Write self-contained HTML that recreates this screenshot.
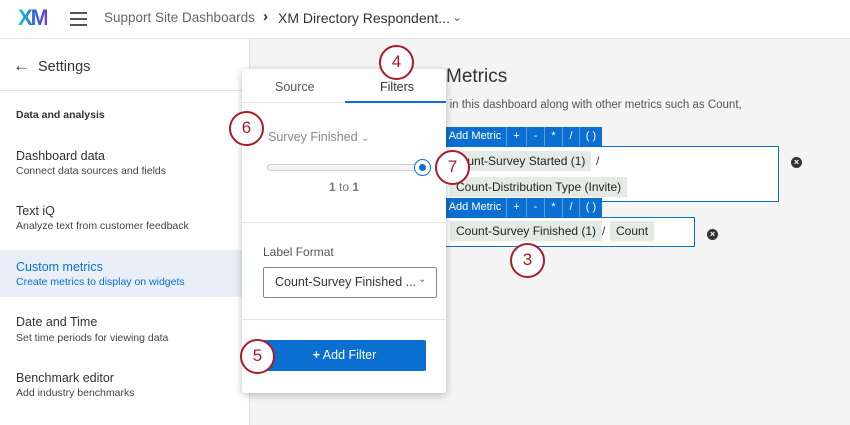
<!DOCTYPE html><html><head><style>
*{box-sizing:border-box;margin:0;padding:0}
body{width:850px;height:425px;overflow:hidden;background:#f4f4f5;font-family:"Liberation Sans",sans-serif;color:#333;position:relative}
.a{position:absolute;white-space:nowrap}
.hdr{left:0;top:0;width:850px;height:39px;background:#fff;border-bottom:1px solid #e2e2e2}
.side{left:0;top:39px;width:250px;height:386px;background:#fff;border-right:1px solid #e2e2e2}
.t{font-size:12.5px;color:#333}.s{font-size:10.5px;color:#444}
.tb{height:19px;background:#0b6fd1;display:flex}
.tb span{color:#fff;font-size:11px;line-height:19px;border-right:1px solid #5a9ee3;text-align:center}
.chip{background:#e3ebe7;font-size:12px;line-height:20px;padding:0 6px;height:20px;color:#222}
.c{width:35px;height:35px;border:2.5px solid #a81c28;border-radius:50%;background:#fff;color:#a81c28;font-size:17px;text-align:center;line-height:30px}
.x{width:11px;height:11px;border-radius:50%;background:#333;color:#fff;font-size:9px;line-height:11px;text-align:center;font-weight:bold}
</style></head><body>
<div class="a hdr"></div>
<div class="a" style="left:18px;top:5px;font-size:22px;font-weight:bold;letter-spacing:-2px;background:linear-gradient(90deg,#20d0d0,#2a6ae0,#6a40e0);-webkit-background-clip:text;color:transparent">XM</div>
<div class="a" style="left:70px;top:12px;width:17px;height:2px;background:#555;box-shadow:0 6px 0 #555,0 12px 0 #555"></div>
<div class="a" style="left:104px;top:10px;font-size:13.5px;color:#666">Support Site Dashboards</div>
<div class="a" style="left:263px;top:8px;font-size:15px;color:#333;font-weight:bold">›</div>
<div class="a" style="left:278px;top:10px;font-size:14px;color:#333">XM Directory Respondent...</div>
<div class="a" style="left:452px;top:10px;font-size:12px;color:#666">⌄</div>
<div class="a side"></div>
<div class="a" style="left:13px;top:56px;font-size:17px;color:#333">←</div>
<div class="a" style="left:38px;top:59px;font-size:14.5px;color:#333">Settings</div>
<div class="a" style="left:0;top:90px;width:250px;height:1px;background:#e5e5e5"></div>
<div class="a" style="left:16px;top:109px;font-size:10.5px;font-weight:bold;color:#333">Data and analysis</div>
<div class="a t" style="left:16px;top:149px">Dashboard data</div><div class="a s" style="left:16px;top:165px">Connect data sources and fields</div>
<div class="a t" style="left:16px;top:204px">Text iQ</div><div class="a s" style="left:16px;top:220px">Analyze text from customer feedback</div>
<div class="a" style="left:0;top:250px;width:250px;height:47px;background:#e9eff8"></div>
<div class="a t" style="left:16px;top:260px;color:#0b6fd1">Custom metrics</div><div class="a s" style="left:16px;top:276px;color:#0b6fd1">Create metrics to display on widgets</div>
<div class="a t" style="left:16px;top:315px">Date and Time</div><div class="a s" style="left:16px;top:332px">Set time periods for viewing data</div>
<div class="a t" style="left:16px;top:371px">Benchmark editor</div><div class="a s" style="left:16px;top:387px">Add industry benchmarks</div>
<div class="a" style="left:446px;top:66px;font-size:19px;color:#333">Metrics</div>
<div class="a" style="left:440px;top:99px;font-size:11.5px;color:#555">e in this dashboard along with other metrics such as Count,</div>
<div class="a tb" style="left:444px;top:127px"><span style="width:63px">Add Metric</span><span style="width:20px">+</span><span style="width:18px">-</span><span style="width:18px">*</span><span style="width:17px">/</span><span style="width:22px;border:0">( )</span></div>
<div class="a" style="left:444px;top:146px;width:335px;height:56px;border:1px solid #0b6fd1;background:#fff"></div>
<div class="a chip" style="left:446px;top:151px">Count-Survey Started (1)</div>
<div class="a" style="left:596px;top:154px;font-size:12px">/</div>
<div class="a chip" style="left:450px;top:177px">Count-Distribution Type (Invite)</div>
<div class="a x" style="left:791px;top:157px">×</div>
<div class="a tb" style="left:444px;top:198px"><span style="width:63px">Add Metric</span><span style="width:20px">+</span><span style="width:18px">-</span><span style="width:18px">*</span><span style="width:17px">/</span><span style="width:22px;border:0">( )</span></div>
<div class="a" style="left:444px;top:217px;width:251px;height:30px;border:1px solid #0b6fd1;background:#fff"></div>
<div class="a chip" style="left:450px;top:221px">Count-Survey Finished (1)</div>
<div class="a" style="left:602px;top:224px;font-size:12px">/</div>
<div class="a chip" style="left:610px;top:221px">Count</div>
<div class="a x" style="left:707px;top:229px">×</div>
<div class="a" style="left:242px;top:69px;width:204px;height:324px;background:#fff;border-radius:3px;box-shadow:0 2px 8px rgba(0,0,0,.25)"></div>
<div class="a" style="left:275px;top:80px;font-size:12.5px;color:#555">Source</div>
<div class="a" style="left:380px;top:80px;font-size:12.5px;color:#333">Filters</div>
<div class="a" style="left:242px;top:102px;width:204px;height:1px;background:#e5e5e5"></div>
<div class="a" style="left:345px;top:101px;width:101px;height:2px;background:#0b6fd1"></div>
<div class="a" style="left:268px;top:130px;font-size:12.5px;color:#888">Survey Finished <span style="font-size:10px">⌄</span></div>
<div class="a" style="left:267px;top:164px;width:155px;height:7px;border:1px solid #ccc;border-radius:4px;background:#f5f5f5"></div>
<div class="a" style="left:414px;top:159px;width:17px;height:17px;border:1.5px solid #0b6fd1;border-radius:50%;background:#fff"></div>
<div class="a" style="left:419px;top:164px;width:7px;height:7px;border-radius:50%;background:#0b6fd1"></div>
<div class="a" style="left:329px;top:180px;font-size:12px;color:#777"><b>1</b> to <b>1</b></div>
<div class="a" style="left:242px;top:222px;width:204px;height:1px;background:#e5e5e5"></div>
<div class="a" style="left:263px;top:245px;font-size:12px;color:#555">Label Format</div>
<div class="a" style="left:263px;top:267px;width:174px;height:31px;border:1px solid #888;border-radius:2px"></div>
<div class="a" style="left:275px;top:275px;font-size:12.5px;color:#333">Count-Survey Finished ...</div>
<div class="a" style="left:418px;top:274px;font-size:10px;color:#666">⌄</div>
<div class="a" style="left:242px;top:319px;width:204px;height:1px;background:#e5e5e5"></div>
<div class="a" style="left:263px;top:340px;width:163px;height:31px;background:#0b6fd1;border-radius:2px;color:#fff;font-size:12.5px;text-align:center;line-height:31px"><b>+</b> Add Filter</div>
<div class="a c" style="left:379px;top:45px">4</div>
<div class="a c" style="left:229px;top:111px">6</div>
<div class="a c" style="left:435px;top:150px">7</div>
<div class="a c" style="left:510px;top:243px">3</div>
<div class="a c" style="left:240px;top:339px">5</div>
</body></html>
